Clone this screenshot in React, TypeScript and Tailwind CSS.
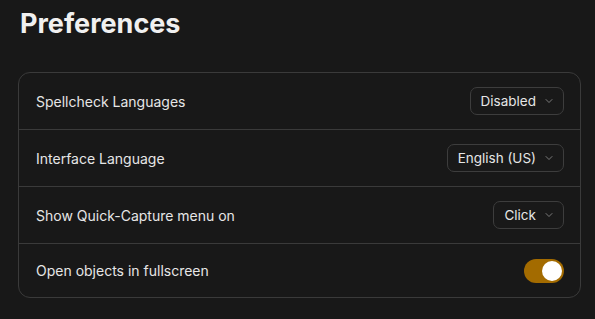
import { ChevronDown } from 'lucide-react'

interface SelectRowProps {
  label: string
  value: string
}

function SelectRow({ label, value }: SelectRowProps) {
  return (
    <div className="flex h-[57px] items-center justify-between border-b border-[#3a3a3a] pl-[17px] pr-[16px]">
      <span className="text-[14px] text-[#e6e6e6]">{label}</span>
      <button className="flex h-[28px] items-center gap-[7px] rounded-[7px] border border-[#3d3d3d] bg-[#191919] pl-[10px] pr-[8px] text-[13.5px] text-[#e6e6e6]">
        {value}
        <ChevronDown size={12} strokeWidth={1.5} className="text-[#9a9a9a]" />
      </button>
    </div>
  )
}

export default function App() {
  return (
    <div
      className="min-h-screen bg-[#181818] pl-[18px] pr-[14px] pt-[6px]"
      style={{ fontFamily: 'Inter, "Noto Sans", sans-serif' }}
    >
      <h1 className="pl-[2px] text-[27px] font-bold leading-[36px] text-[#f0f0f0]">
        Preferences
      </h1>
      <div className="mt-[30px] rounded-[12px] border border-[#3a3a3a]">
        <SelectRow label="Spellcheck Languages" value="Disabled" />
        <SelectRow label="Interface Language" value="English (US)" />
        <SelectRow label="Show Quick-Capture menu on" value="Click" />
        <div className="flex h-[53px] items-center justify-between pl-[17px] pr-[16px]">
          <span className="text-[14px] text-[#e6e6e6]">Open objects in fullscreen</span>
          <div className="flex h-[24px] w-[40px] items-center justify-end rounded-full bg-[#a36b00] px-[2px]">
            <div className="h-[20px] w-[20px] rounded-full bg-white" />
          </div>
        </div>
      </div>
    </div>
  )
}
